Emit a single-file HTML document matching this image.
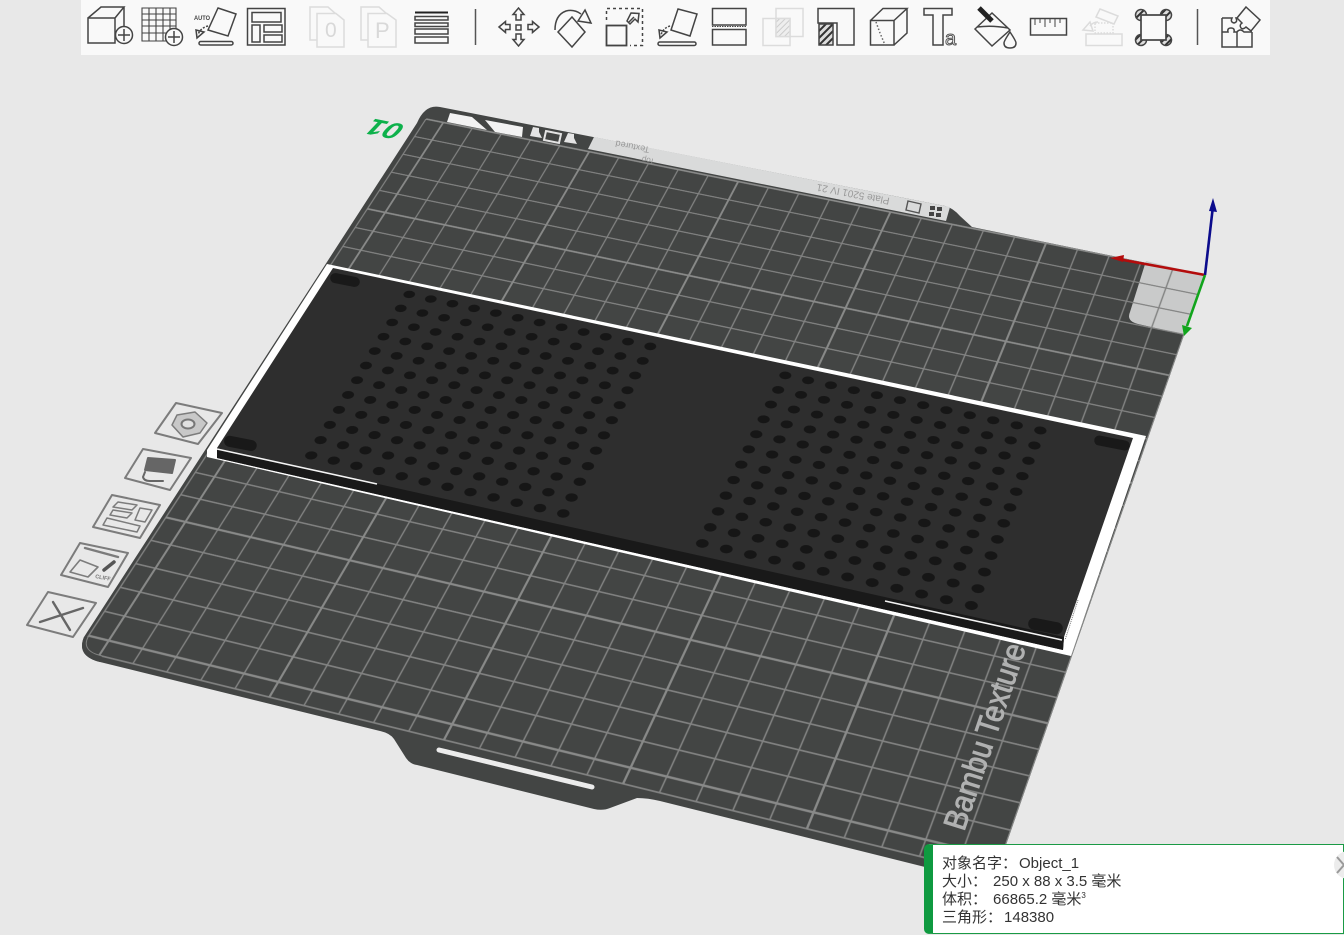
<!DOCTYPE html>
<html><head><meta charset="utf-8"><style>
html,body{margin:0;padding:0;background:#e8e8e8;width:1344px;height:935px;overflow:hidden}
svg{position:absolute;left:0;top:0}
#tb{position:absolute;left:81px;top:0;width:1189px;height:55px;background:#f9f9f9}
#gw{position:absolute;left:0;top:0;width:1344px;height:935px;overflow:hidden;clip-path:path("M440 107L945 206Q953 208 960 216L972 227L1205 275L992 885L925 867L660 801Q648 798 637 798L610 808Q603 811 594 809L417 765Q410 764 406 758L394 739Q390 733 380 731L100 662Q76 656 84 637L417 123Q425 104 440 107Z")}
.pl{position:absolute;left:0;top:0;width:0;height:0;transform-origin:0 0}
#g{transform:matrix3d(.93049,.18400,0,-.00006957,-.46852,.55457,0,-.00021136,0,0,1,0,426,119,0,1)}
#hl{transform:matrix3d(.832532,.165756,0,-.00006744,-.412972,.502640,0,-.00018201,0,0,1,0,409,294,0,1)}
#hr{transform:matrix3d(.852524,.169096,0,-.00007188,-.447616,.498136,0,-.00020768,0,0,1,0,785,375,0,1)}
#panel{position:absolute;left:924px;top:844px;width:420px;height:90px;background:#fff;box-sizing:border-box;border:1px solid #1a9a45;border-left:9px solid #0f9a40;border-radius:5px 0 0 5px;font:15px/18px "Liberation Sans","Noto Sans CJK SC",sans-serif;color:#333;padding:10px 0 0 9px;white-space:pre}
#panel sup{font-size:8px;line-height:0;vertical-align:6px}
#panel span{display:inline-block}
#cl{position:absolute;left:1334px;top:851px;width:28px;height:28px;border-radius:50%;background:#ececec}
</style></head><body>
<div id="tb"></div>
<svg width="1344" height="935" viewBox="0 0 1344 935" xmlns="http://www.w3.org/2000/svg">
<path d="M440 107L945 206Q953 208 960 216L972 227L1205 275L992 885L925 867L660 801Q648 798 637 798L610 808Q603 811 594 809L417 765Q410 764 406 758L394 739Q390 733 380 731L100 662Q76 656 84 637L417 123Q425 104 440 107Z" fill="#434544"/>
<path d="M450 113L472 117L487 130L447 122Z" fill="#f2f2f2"/>
<path d="M485 120L523 127L522 137L495 132Z" fill="#f2f2f2"/>
<path d="M594 137L950 207L946 221L588 149Z" fill="#d9dada"/>
<g fill="#e4e4e4"><path d="M533 127l6 1v4l3 6-12-2z"/><path d="M568 133l6 1v4l3 6-13-2z"/></g>
<path d="M546 131L561 134L559 143L544 140Z" fill="none" stroke="#e4e4e4" stroke-width="2"/>
<path d="M908 201L921 204L919 213L906 210Z" fill="none" stroke="#555" stroke-width="1.4"/>
<g fill="#444"><rect x="930" y="206" width="5" height="4"/><rect x="937" y="207" width="5" height="4"/><rect x="929" y="212" width="5" height="4"/><rect x="936" y="213" width="5" height="4"/></g>
<text transform="translate(650,147) rotate(191)" font-family="Liberation Sans,sans-serif" font-size="9" fill="#999">Textured</text>
<text transform="translate(655,159) rotate(191)" font-family="Liberation Sans,sans-serif" font-size="8" fill="#999">Top</text>
<text transform="translate(890,198) rotate(191)" font-family="Liberation Sans,sans-serif" font-size="10" fill="#999">Plate 5201 IV 21</text>
<path d="M1146 261L1205 275L1185 335L1138 324Q1126 321 1130 312Z" fill="#c9caca"/>
</svg>

<div id="gw"><div class="pl" id="g"><svg width="768" height="768" viewBox="0 0 768 768" style="overflow:visible">
<path fill="none" stroke="#828382" stroke-width="1.300" d="M738 0V768M708 0V768M678 0V768M648 0V768M588 0V768M558 0V768M528 0V768M498 0V768M438 0V768M408 0V768M378 0V768M348 0V768M288 0V768M258 0V768M228 0V768M198 0V768M138 0V768M108 0V768M78 0V768M48 0V768M0 0V768"/>
<path fill="none" stroke="#828382" stroke-width="1.800" d="M0 30H768M0 60H768M0 90H768M0 120H768M0 180H768M0 210H768M0 240H768M0 270H768M0 330H768M0 360H768M0 390H768M0 420H768M0 480H768M0 510H768M0 540H768M0 570H768M0 630H768M0 660H768M0 690H768M0 720H768M0 768H768"/>
<path fill="none" stroke="#898a89" stroke-width="1.900" d="M768 0V768M618 0V768M468 0V768M318 0V768M168 0V768M18 0V768"/>
<path fill="none" stroke="#898a89" stroke-width="2.600" d="M0 0H768M0 150H768M0 300H768M0 450H768M0 600H768M0 750H768"/>
</svg></div></div>

<svg width="1344" height="935" viewBox="0 0 1344 935" xmlns="http://www.w3.org/2000/svg">
<path d="M88 637Q81 651 102 656L100 662Q76 656 84 637Z" fill="#434544" stroke="none"/>
<path d="M88 637Q81 651 102 656" fill="none" stroke="#7f807f" stroke-width="1"/>
<text transform="matrix(.29,-.86,.956,.30,964,832)" font-family="Liberation Sans,sans-serif" font-size="32" fill="#b0b1b1" stroke="#b0b1b1" stroke-width=".9">Bambu Textured</text>
<path d="M439 750L592 787" stroke="#ececec" stroke-width="5" stroke-linecap="round"/>
<text transform="matrix(-1.1,-.22,.5,-.8,406,125)" font-family="Liberation Sans,sans-serif" font-size="27" font-weight="bold" font-style="italic" fill="#0db14b">01</text>
<!-- object -->
<path d="M327 264L1146 436L1071 656L1062 654L207 457L207 450Z" fill="#fff"/>
<path d="M333 268L1133 438L1064 637L1063 650L217 458L217 448Z" fill="#2e2e2e"/>
<path d="M217 448L1064 637L1063 650L217 458Z" fill="#191919"/>
<path d="M217 449L377 484M885 601L1062 640" stroke="#f4f4f4" stroke-width="1.600"/>
<path d="M1078 600L1065 640" stroke="#777" stroke-width="1" stroke-dasharray="1 1"/>
</svg>

<div class="pl" id="hl"><svg width="300" height="300" viewBox="0 0 300 300" style="left:-12.500px;top:-12.500px"><defs><pattern id="ho1" width="25" height="25" patternUnits="userSpaceOnUse"><circle cx="12.500" cy="12.500" r="6.300" fill="#161616"/></pattern></defs><rect width="300" height="300" fill="url(#ho1)"/></svg></div>
<div class="pl" id="hr"><svg width="300" height="300" viewBox="0 0 300 300" style="left:-12.500px;top:-12.500px"><defs><pattern id="ho2" width="25" height="25" patternUnits="userSpaceOnUse"><circle cx="12.500" cy="12.500" r="6.300" fill="#161616"/></pattern></defs><rect width="300" height="300" fill="url(#ho2)"/></svg></div>

<svg width="1344" height="935" viewBox="0 0 1344 935" xmlns="http://www.w3.org/2000/svg">
<defs>
<pattern id="h1" width="5" height="5" patternUnits="userSpaceOnUse" patternTransform="rotate(45)"><rect width="5" height="5" fill="#ddd"/><rect width="2" height="5" fill="#333"/></pattern>
<pattern id="h2" width="4" height="4" patternUnits="userSpaceOnUse" patternTransform="rotate(45)"><rect width="4" height="4" fill="#eee"/><rect width="1" height="4" fill="#ccc"/></pattern>
</defs>
<g fill="#191919">
<rect x="330" y="275" width="30" height="10" rx="5" transform="rotate(11 345 280)"/>
<rect x="224" y="438" width="33" height="11" rx="5.500" transform="rotate(11 241 443)"/>
<rect x="1094" y="438" width="36" height="10" rx="5" transform="rotate(11 1112 443)"/>
<rect x="1028" y="620" width="35" height="12" rx="6" transform="rotate(11 1045 626)"/>
</g>
<!-- gizmo -->
<g fill="none" stroke-width="2.600">
<path d="M1205 275L1118 259" stroke="#b30c0c"/>
<path d="M1205 275L1213 206" stroke="#0b0b8c"/>
<path d="M1205 275L1187 326" stroke="#11a51c"/>
</g>
<path d="M1110 258L1124 255L1123 262Z" fill="#b30c0c"/>
<path d="M1213 198L1217 212L1209 211Z" fill="#0b0b8c"/>
<path d="M1184 336L1182 325L1192 328Z" fill="#11a51c"/>

<!-- left buttons -->
<g fill="none" stroke="#7c7c7c" stroke-width="2" stroke-linejoin="round" stroke-linecap="round">
<path d="M176 403L222 413L198 444L155 433Z"/>
<path d="M177 415L195 412L207 423L200 433L183 437L172 425Z" stroke-width="1.500" fill="#c8c8c8"/>
<ellipse cx="188" cy="424" rx="6.500" ry="4.500" stroke="#777" fill="#e0e0e0"/>
<path d="M143 449L191 458L170 490L125 478Z"/>
<path d="M148 458L175 460L172 473L145 470Z" fill="#666" stroke="#666"/>
<path d="M145 472L143 477Q144 481 150 481L163 481" stroke="#666" stroke-width="2"/>
<path d="M112 495L160 505L140 538L93 527Z"/>
<path d="M118 502L137 505L132 510L113 507ZM113 510L132 513L127 518L110 515ZM140 508L152 510L145 522L135 520ZM107 518L140 526L137 532L103 525Z" stroke-width="1.500"/>
<path d="M80 543L128 553L108 587L61 575Z"/>
<path d="M85 548L118 557" stroke-width="2.400"/>
<path d="M80 560L98 567L88 577L70 572Z" stroke-width="1.600"/>
<path d="M104 570L114 562" stroke="#555" stroke-width="3.500"/>
<path d="M48 592L96 603L73 637L27 625Z"/>
<path d="M53 602L70 630M40 622L83 608" stroke="#666" stroke-width="2.400"/>
</g>
<text x="95" y="578" font-family="Liberation Sans,sans-serif" font-size="5.500" fill="#777" transform="rotate(10 95 578)" font-weight="bold">CLIFF</text>

<!-- toolbar icons -->
<g fill="none" stroke="#444" stroke-width="1.500">
<path d="M88 18H115V43H88ZM88 18L101 7H124L115 18M124 7V27"/>
<circle cx="124" cy="35" r="8.500" fill="#f9f9f9"/><path d="M118 35H130M124 29V41"/>
<path d="M142 8H176V41H142ZM149 8V41M156 8V41M163 8V41M170 8V41M142 14H176M142 20H176M142 26H176M142 33H176" stroke-width="1.100"/>
<circle cx="174" cy="37" r="8.500" fill="#f9f9f9"/><path d="M168 37H180M174 31V43"/>
<path d="M218 8L236 14L228 36L208 30Z"/>
<rect x="199" y="41.500" width="34" height="3.500" rx="1.700"/>
<path d="M208 26Q200 28 198 35" stroke-dasharray="2 1.500"/>
<path d="M196 30L204 32L197 38Z"/>
<path d="M247.500 8.500H285V45H247.500ZM252 12.500H281V22H252ZM252 25H260V42H252ZM264 25H282V32H264ZM264 35H282V42H264Z"/>
<path d="M415 12.500H448" stroke="#222" stroke-width="2"/>
<path d="M415 16.500H448V20H415ZM415 23H448V26.500H415ZM415 29H448V34H415ZM415 37H448V43H415Z"/>
<path d="M475.500 9V45" stroke="#555"/>
<rect x="516" y="25" width="5" height="5"/>
<path d="M518.500 8L524 14.500H521V20H516V14.500H513ZM518.500 46L524 39.500H521V34H516V39.500H513ZM499 27L505.500 21.500V24.500H510V29.500H505.500V32.500ZM539 27L532.500 21.500V24.500H528V29.500H532.500V32.500Z"/>
<path d="M572 17L585 32L572 47L558 32Z"/>
<path d="M555 30Q555 15 566 11Q574 9 581 14"/>
<path d="M585 10L591 23L578 21Z"/>
<rect x="606.500" y="25.500" width="20" height="20" stroke-width="1.800"/>
<path d="M606.500 20V8.500H642.500V45.500H630" stroke-dasharray="3 3"/>
<path d="M628 23L634 17M631 13L639 13.500L638 22L635 19L630 24L627 21Z"/>
<path d="M678 9L697 14L690 36L671 30Z"/>
<rect x="658" y="42" width="38" height="3.500" rx="1.700"/>
<path d="M670 26Q663 28 661 35" stroke-dasharray="2 1.500"/>
<path d="M659 30L667 32L660 38Z"/>
<path d="M712.500 8.500H746V25H712.500ZM712.500 29.500H746V45H712.500Z"/>
<path d="M712 26.500H746" stroke-dasharray="1.500 1" stroke-width="1"/>
<path d="M818 8.500H854V45H837V23H818Z"/>
<rect x="819" y="24" width="14" height="21" fill="url(#h1)" stroke="#444"/>
<path d="M870.500 20.500H894V45H870.500ZM870.500 20.500L883 8.500H907L894 20.500M907 8.500V33L894 45"/>
<path d="M876 22L880 33L885 45" stroke-dasharray="1.500 2" stroke="#666"/>
<path d="M924 8.500H952V15H943V45H933V15H924Z"/>
<path d="M975 29L992 13L1010 30L992 46ZM977 27Q992 25 1008 28"/>
<path d="M979 8L992 21" stroke="#222" stroke-width="5"/>
<path d="M1010 32Q1004 41 1004 43Q1004 48 1010 48Q1016 48 1016 43Q1016 41 1010 32Z"/>
<rect x="1030.500" y="18.500" width="36" height="16.500"/>
<path d="M1035 19V25M1040 19V23M1045 19V27M1050 19V23M1055 19V27M1060 19V23" stroke-width="1"/>
<circle cx="1141" cy="15" r="5.500" fill="url(#h1)"/><circle cx="1166" cy="15" r="5.500" fill="url(#h1)"/><circle cx="1141" cy="40" r="5.500" fill="url(#h1)"/><circle cx="1166" cy="40" r="5.500" fill="url(#h1)"/>
<rect x="1141" y="15" width="25" height="25" fill="#f9f9f9" stroke-width="1.700"/>
<path d="M1197.500 9V45" stroke="#555"/>
<path d="M1222 18H1232Q1230 22 1234 23Q1238 22 1236 18H1239M1222 18V47H1252V32M1222 32H1228Q1227 28 1231 28Q1235 28 1234 32H1237V47M1237 32Q1240 28 1244 32H1252"/>
<path d="M1246 7L1260 20L1251 31L1246 27Q1243 30 1241 28Q1239 25 1242 23L1237 18Z" fill="#f9f9f9"/>
</g>
<text x="194" y="20" font-family="Liberation Sans,sans-serif" font-size="6.500" font-weight="bold" fill="#444" textLength="16" lengthAdjust="spacingAndGlyphs">AUTO</text>
<text x="945" y="45" font-family="Liberation Sans,sans-serif" font-size="20" fill="#f9f9f9" stroke="#555" stroke-width="1">a</text>
<g fill="none" stroke="#dcdcdc" stroke-width="1.500">
<path d="M310 7H328L336 14V40H310Z"/><path d="M317 13.500H336L344 20V47H317Z" fill="#f9f9f9"/>
<path d="M361 7H379L387 14V40H361Z"/><path d="M368 13.500H387L396 20V47H368Z" fill="#f9f9f9"/>
<rect x="776" y="8.500" width="27" height="28"/><rect x="763" y="18.500" width="27" height="27"/>
<rect x="776" y="18.500" width="14" height="18" fill="url(#h2)"/>
<path d="M1100 9L1118 16L1114 24L1096 17ZM1083 30L1090 22L1093 31ZM1090 26Q1093 22 1098 22"/>
<path d="M1095 23H1113V33H1095Z" stroke-dasharray="1.500 1.500"/>
<rect x="1086" y="34" width="36" height="11.500"/>
</g>
<text x="325" y="37" font-family="Liberation Sans,sans-serif" font-size="21" fill="#d8d8d8">0</text>
<text x="375" y="38" font-family="Liberation Sans,sans-serif" font-size="22" fill="#d8d8d8">P</text>
</svg>
<div id="panel">对象名字：<span style="margin-left:2px">Object_1</span>
大小：<span style="margin-left:6px">250 x 88 x 3.5 毫米</span>
体积：<span style="margin-left:6px">66865.2 毫米<sup>3</sup></span>
三角形：<span style="margin-left:2px">148380</span></div>
<div id="cl"></div>
<svg width="1344" height="935" viewBox="0 0 1344 935"><path d="M1337 857L1344 865L1337 873" fill="none" stroke="#999" stroke-width="2"/></svg>
</body></html>
